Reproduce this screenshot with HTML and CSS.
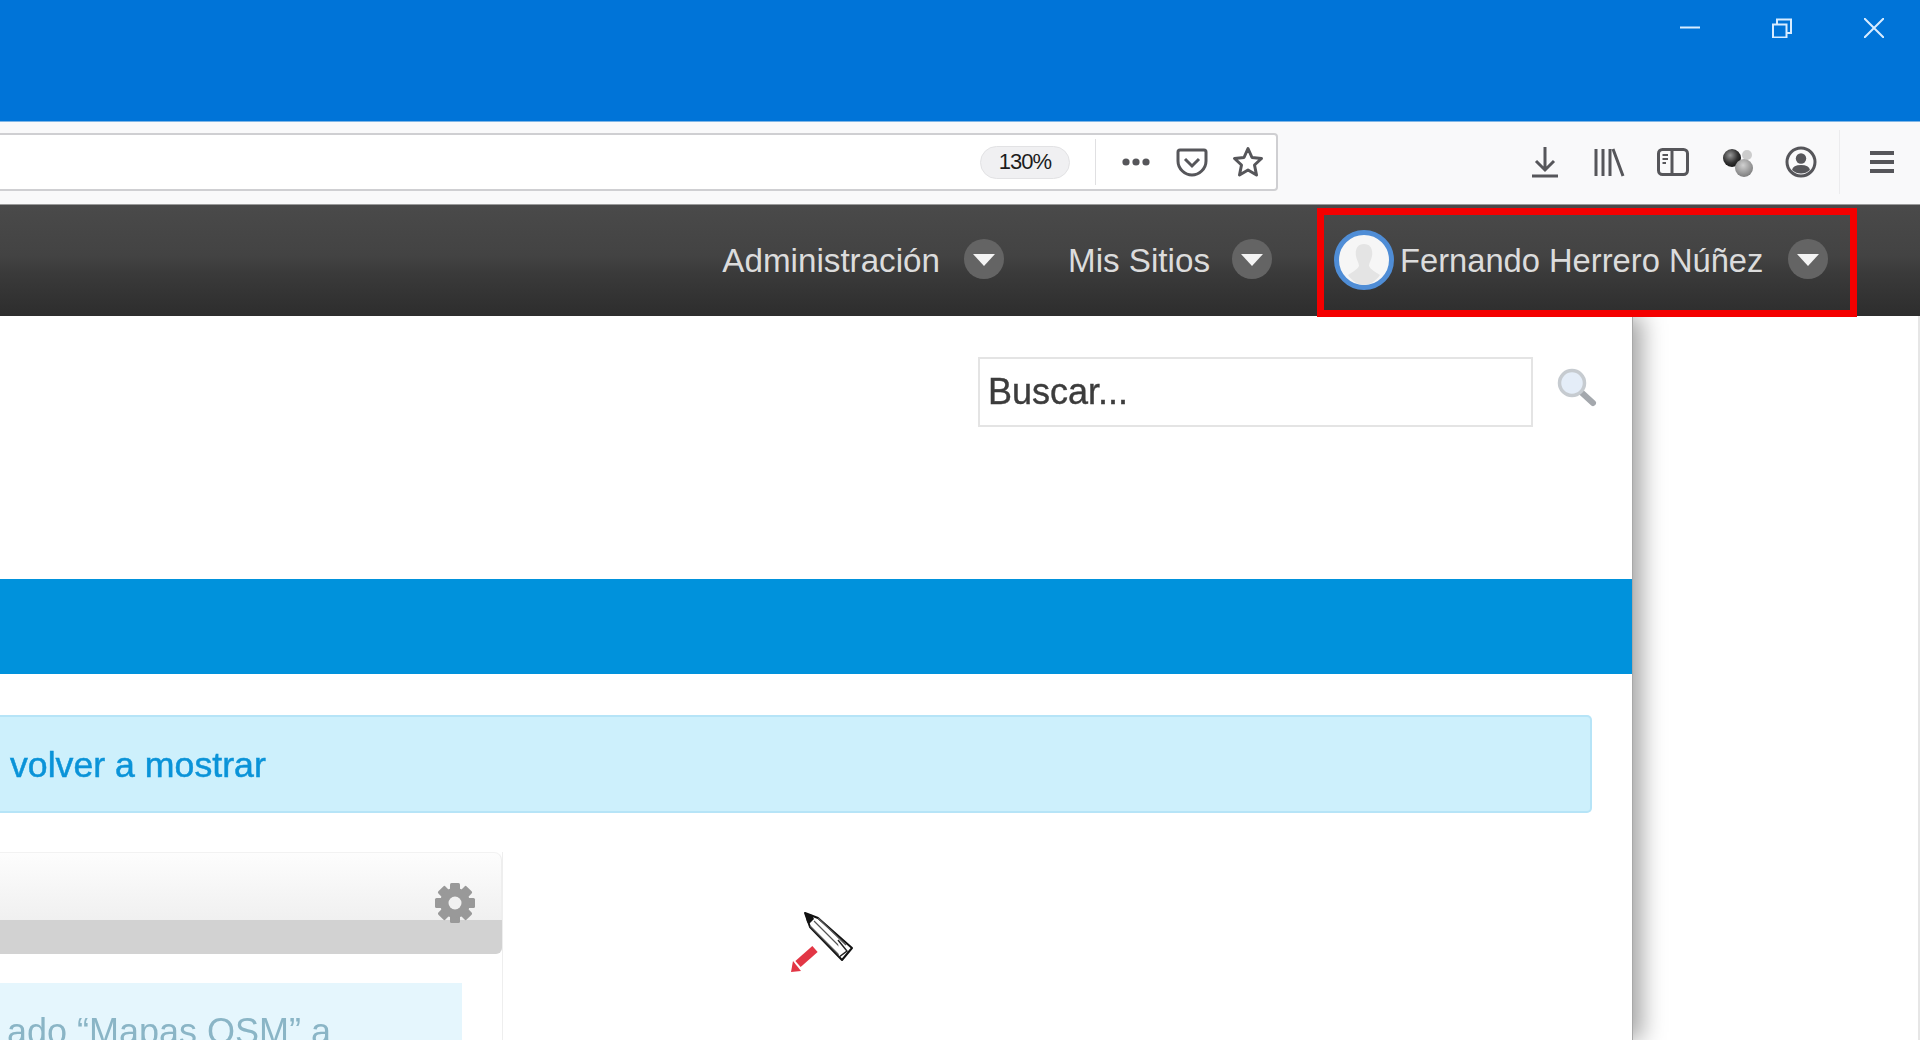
FILE: index.html
```html
<!DOCTYPE html>
<html lang="es">
<head>
<meta charset="utf-8">
<title>Mis Sitios</title>
<link rel="stylesheet" href="styles.css">
</head>
<body>
<div class="window">
  <header class="titlebar">
    <svg class="winctl" viewBox="0 0 20 20"><path d="M0 9.5H20" /></svg>
    <svg class="winctl" viewBox="0 0 20 20"><path d="M1 6.5H14.5V19.5H1ZM5 6V1.5H19V15H15" /></svg>
    <svg class="winctl" viewBox="0 0 20 20"><path d="M0 0L20 20M20 0L0 20" /></svg>
  </header>
  <div class="toolbar">
    <div class="urlbar">
      <span class="zoom-pill">130%</span>
      <span class="url-sep"></span>
      <span class="slot"><svg class="ico" width="32" height="32" viewBox="0 0 32 32"><circle cx="6" cy="16" r="3.6" class="f"/><circle cx="16" cy="16" r="3.6" class="f"/><circle cx="26" cy="16" r="3.6" class="f"/></svg></span>
      <span class="slot"><svg class="ico" width="32" height="32" viewBox="0 0 32 32"><path class="s" d="M4 4H28Q30 4 30 6V15C30 23 23 29 16 29C9 29 2 23 2 15V6Q2 4 4 4Z"/><path class="s" d="M9 13L16 20L23 13"/></svg></span>
      <span class="slot"><svg class="ico" width="32" height="32" viewBox="0 0 32 32"><path class="s" stroke-linejoin="round" d="M16 2.5L20 11.5L29.5 12.5L22.5 19L24.5 29L16 24L7.5 29L9.5 19L2.5 12.5L12 11.5Z"/></svg></span>
    </div>
    <div class="tools">
      <span class="tool"><svg class="ico" width="32" height="32" viewBox="0 0 32 32"><path class="s" d="M16 1V23M7 15L16 24L25 15M3 30H29"/></svg></span>
      <span class="tool"><svg class="ico" width="32" height="32" viewBox="0 0 32 32"><path class="s" d="M3 3V30M10 3V30M17 3V30M20 3L30 30"/></svg></span>
      <span class="tool"><svg class="ico" width="32" height="32" viewBox="0 0 32 32"><rect class="s" x="1.5" y="3.5" width="29" height="25" rx="4"/><path class="s" d="M15 4V28"/><path class="thin" d="M5.5 9H11M5.5 13H11M5.5 17H9"/></svg></span>
      <span class="tool"><svg class="ico" width="36" height="36" viewBox="0 0 36 36"><defs><radialGradient id="b1" cx=".4" cy=".35" r=".7"><stop offset="0" stop-color="#999"/><stop offset=".6" stop-color="#333"/><stop offset="1" stop-color="#111"/></radialGradient><radialGradient id="b2" cx=".45" cy=".35" r=".7"><stop offset="0" stop-color="#d0d0d0"/><stop offset="1" stop-color="#777"/></radialGradient></defs><circle cx="28" cy="11" r="5" fill="#ccc"/><circle cx="13" cy="14" r="9" fill="url(#b1)"/><circle cx="25" cy="24" r="9" fill="url(#b2)"/></svg></span>
      <span class="tool"><svg class="ico" width="32" height="32" viewBox="0 0 32 32"><circle class="s" cx="16" cy="16" r="14"/><circle class="f" cx="16" cy="12.5" r="5.2"/><path class="f" d="M7 24Q8 19 16 19Q24 19 25 24Q21 27.5 16 27.5Q11 27.5 7 24Z"/></svg></span>
      <span class="tool-sep"></span>
      <span class="hamburger"><svg class="ico" width="26" height="24" viewBox="0 0 26 24"><path class="s3" d="M1 3H25M1 12H25M1 21H25"/></svg></span>
    </div>
  </div>
  <nav class="navbar">
    <a class="nav-item">Administración<span class="caret"></span></a>
    <a class="nav-item">Mis Sitios<span class="caret"></span></a>
    <a class="nav-user">
      <span class="avatar"><svg width="50" height="50" viewBox="0 0 50 50"><path d="M25 9C32 9 34 15 33 21C32 26 30 28 30 31C32 35 37 37 41 40C37 46 31 50 25 50C19 50 13 46 9 40C13 37 18 35 20 31C20 28 18 26 17 21C16 15 18 9 25 9Z" fill="#e4e4e4"/></svg></span>
      <span class="user-name">Fernando Herrero Núñez</span>
      <span class="caret"></span>
    </a>
  </nav>
  <div class="page">
    <main class="content">
      <div class="search-row">
        <input class="search-input" type="text" placeholder="Buscar...">
        <svg class="search-ico" width="42" height="42" viewBox="0 0 42 42"><path d="M25 25L37 36" stroke="#a4a8ad" stroke-width="6" stroke-linecap="round"/><circle cx="16" cy="16" r="12.5" fill="#e4edf8" stroke="#c6cbd0" stroke-width="3.5"/></svg>
      </div>
      <div class="band"></div>
      <div class="notice"><a class="notice-link">volver a mostrar</a></div>
      <section class="panel">
        <div class="panel-head">
          <div class="panel-top"></div>
          <div class="panel-bar"></div>
          <svg class="gear" width="44" height="44" viewBox="0 0 44 44"><g fill="#999"><rect x="17" y="2" width="10" height="40" rx="1.5"/><rect x="17" y="2" width="10" height="40" rx="1.5" transform="rotate(45 22 22)"/><rect x="17" y="2" width="10" height="40" rx="1.5" transform="rotate(90 22 22)"/><rect x="17" y="2" width="10" height="40" rx="1.5" transform="rotate(135 22 22)"/><circle cx="22" cy="22" r="15"/></g><circle cx="22" cy="22" r="6.5" fill="#f1f1f1"/></svg>
        </div>
        <div class="panel-msg"><p class="msg-text">ado “Mapas OSM” a</p></div>
      </section>
    </main>
    <div class="gutter"></div>
  </div>
</div>
<svg class="pencil" width="120" height="100" viewBox="0 0 120 100"><path d="M45 23L58 28L92 58L82 70L50 37Z" fill="#fff" stroke="#111" stroke-width="2" stroke-linejoin="round"/><path d="M45 23L52 25L54 29L49 34L47 32Z" fill="#111"/><path d="M54 31L83 60M58 28L86 55M50 36L79 65" stroke="#555" stroke-width="1.2" fill="none"/><path d="M78 50L87 61L79 67" stroke="#222" stroke-width="1.5" fill="#fff"/><path d="M55 59L38 74" stroke="#e23645" stroke-width="8"/><path d="M33 71L41 81L31 82Z" fill="#e23645"/></svg>
</body>
</html>
```
FILE: styles.css
```css
* { box-sizing: border-box; }
html, body { margin: 0; padding: 0; height: 100%; overflow: hidden; background: #fff; }
body { font-family: "Liberation Sans", Arial, sans-serif; }

.window { display: flex; flex-direction: column; width: 1920px; height: 1040px; overflow: hidden; filter: blur(0.6px); }

.titlebar { flex: none; height: 122px; background: #0074d8; border-bottom: 1px solid #7fb6e6; display: flex; justify-content: flex-end; align-items: flex-start; padding: 18px 36px 0 0; gap: 72px; }
.winctl { width: 20px; height: 20px; fill: none; stroke: #d8ecff; stroke-width: 2; }

.toolbar { flex: none; height: 82px; background: #f9f9fa; display: flex; align-items: flex-start; justify-content: space-between; }
.urlbar { width: 1278px; height: 58px; margin-top: 11px; background: #fff; border: 2px solid #cfcfd2; border-left: 0; border-radius: 0 4px 4px 0; display: flex; align-items: center; justify-content: flex-end; }
.zoom-pill { width: 90px; height: 33px; border-radius: 17px; border: 1px solid #e2e2e4; background: #f0f0f2; color: #1c1c1c; font-size: 22px; letter-spacing: -1px; display: flex; align-items: center; justify-content: center; }
.url-sep { width: 1px; height: 46px; background: #e0e0e2; margin: 0 12px 0 25px; }
.slot { width: 56px; display: flex; justify-content: center; }
.ico { display: block; }
.ico .s { fill: none; stroke: #56565a; stroke-width: 3; }
.ico .thin { fill: none; stroke: #56565a; stroke-width: 2; }
.ico .s3 { fill: none; stroke: #56565a; stroke-width: 4; }
.ico .f { fill: #56565a; }
.tools { display: flex; align-items: center; height: 64px; margin-top: 8px; }
.tool { width: 64px; display: flex; justify-content: center; }
.tool-sep { width: 1px; height: 64px; background: #ececee; margin-left: 6px; }
.hamburger { width: 80px; padding-left: 4px; display: flex; justify-content: center; }

.navbar { flex: none; height: 112px; background: linear-gradient(#4a4a4a 0%, #434343 45%, #3a3a3a 62%, #2d2d2d 100%); border-top: 1px solid #9a9a9a; display: flex; justify-content: flex-end; align-items: center; padding-right: 63px; position: relative; z-index: 2; }
.nav-item { display: flex; align-items: center; gap: 24px; color: #dcdcdc; font-size: 33.2px; margin-right: 64px; }
.nav-item + .nav-item { gap: 22px; margin-right: 45px; }
.caret { flex: none; width: 40px; height: 40px; border-radius: 50%; background: #646464; position: relative; display: block; margin-top: -4px; }
.caret::after { content: ""; position: absolute; left: 9px; top: 15px; border-style: solid; border-width: 12px 11px 0; border-color: #f4f4f4 transparent transparent; }
.nav-user { align-self: flex-start; width: 540px; height: 109px; margin-top: 3px; border: 7px solid #f40000; display: flex; align-items: center; color: #dcdcdc; font-size: 32.7px; padding-left: 10px; }
.nav-user .caret { margin-top: -8px; }
.avatar { flex: none; width: 60px; height: 60px; border-radius: 50%; border: 5px solid #4f8dd6; background: #f6f6f6; overflow: hidden; display: block; margin-top: -5px; }
.avatar svg { display: block; }
.user-name { margin-left: 6px; width: 388px; white-space: nowrap; margin-top: -4px; }

.page { flex: 1; display: flex; min-height: 0; }
.content { flex: none; width: 1632px; background: #fff; box-shadow: 1px 0 0 #a8a8a8, 10px 0 22px rgba(0,0,0,.36); position: relative; z-index: 1; }
.gutter { flex: 1; border-right: 2px solid #e6e6e6; }

.search-row { display: flex; justify-content: flex-end; align-items: flex-start; padding: 41px 34px 0 0; height: 110px; }
.search-input { width: 555px; height: 70px; border: 2px solid #e4e4e4; padding: 0 8px; font: 36px "Liberation Sans", Arial, sans-serif; color: #3c3c3c; outline: none; background: #fff; }
.search-input::placeholder { color: #3c3c3c; opacity: 1; -webkit-text-stroke: 0.4px #3c3c3c; }
.search-ico { margin: 10px 0 0 23px; }

.band { height: 95px; margin-top: 153px; background: #0092dc; }

.notice { width: 1592px; height: 98px; margin-top: 41px; background: #cdf0fc; border: 2px solid #b6e4f7; border-left: 0; border-radius: 0 5px 5px 0; display: flex; align-items: center; padding: 2px 0 0 10px; }
.notice-link { color: #0a93d8; font-size: 35.7px; -webkit-text-stroke: 0.5px #0a93d8; }

.panel { width: 503px; margin-top: 39px; border-right: 1px solid #eeeeee; }
.panel-head { position: relative; }
.panel-top { height: 68px; background: linear-gradient(#fdfdfd, #f0f0f0); border-radius: 0 8px 0 0; border-top: 1px solid #f2f2f2; border-right: 1px solid #eeeeee; }
.panel-bar { height: 34px; background: #d2d2d2; border-radius: 0 0 6px 0; }
.gear { position: absolute; right: 25px; top: 29px; }
.panel-msg { width: 462px; height: 60px; margin-top: 29px; background: #e5f6fd; overflow: hidden; }
.msg-text { margin: 31px 0 0; color: #8ab5c6; font-size: 36px; line-height: 36px; white-space: nowrap; text-align: right; padding-right: 131px; }

.pencil { position: absolute; left: 760px; top: 890px; z-index: 5; }
```
